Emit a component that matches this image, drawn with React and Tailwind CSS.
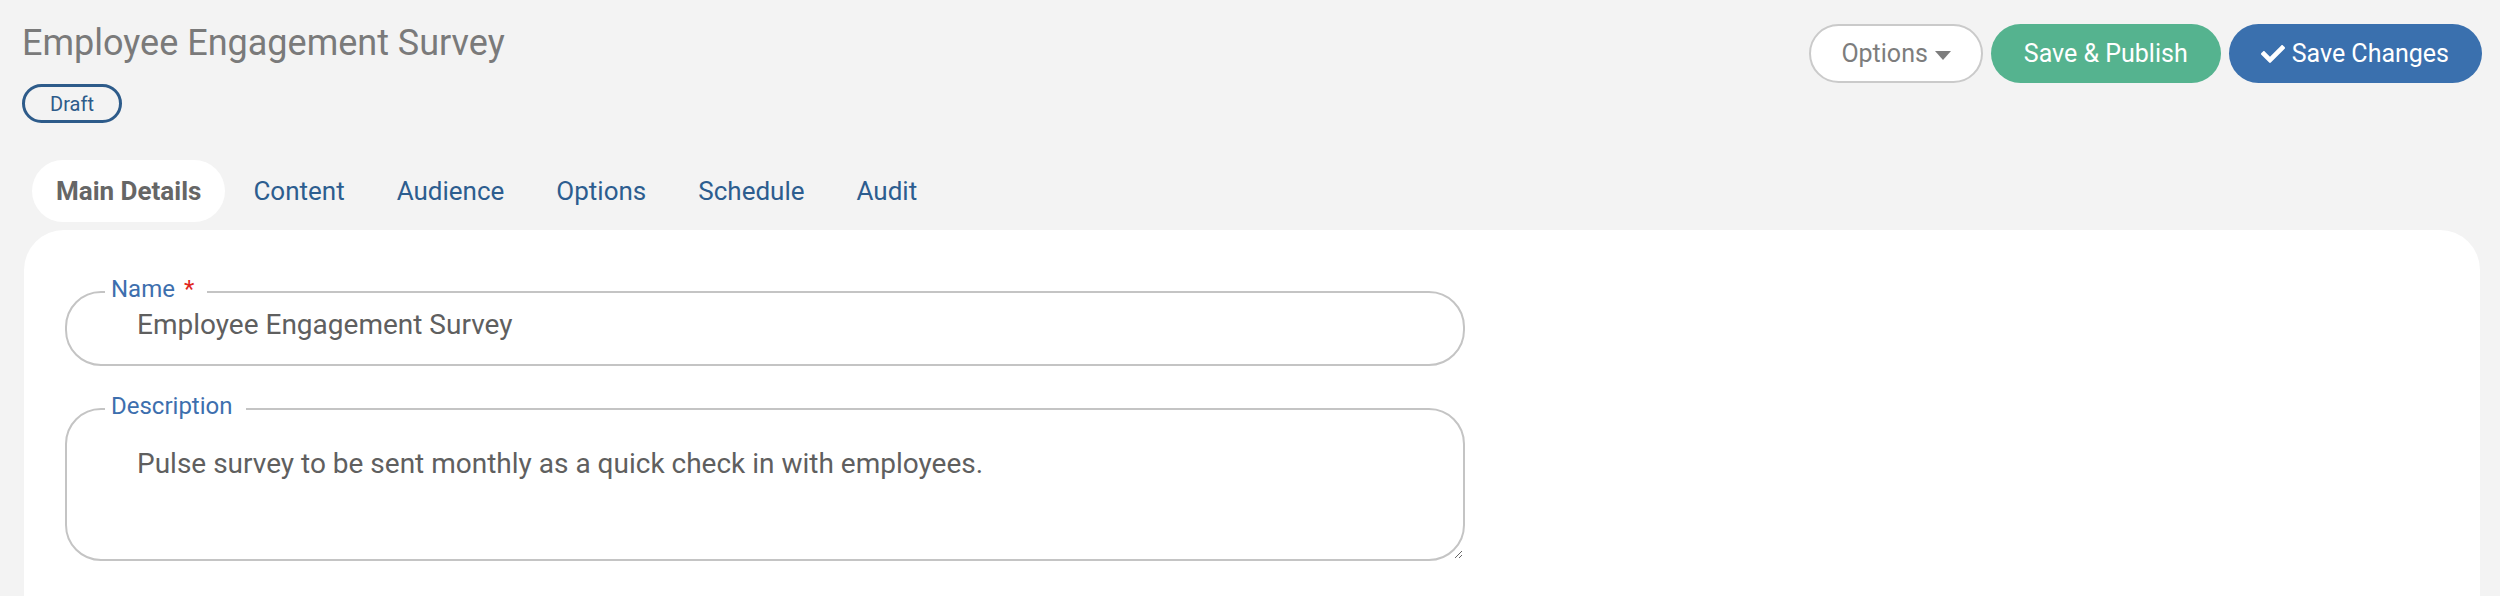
import React from "react";
import { FaCheck } from "react-icons/fa";

const tabs = ["Main Details", "Content", "Audience", "Options", "Schedule", "Audit"];

export default function App() {
  return (
    <div className="h-[596px] overflow-hidden bg-[#f3f3f3] font-[Roboto,sans-serif] flex flex-col">
      {/* Header */}
      <div className="flex items-start justify-between pt-[24px] pl-[22px] pr-[18px]">
        <div className="flex flex-col items-start">
          <h1 className="mt-[1px] text-[36px] leading-none font-normal text-[#7a7a7a]">
            Employee Engagement Survey
          </h1>
          <span className="mt-[23px] flex h-[39px] w-[100px] items-center justify-center rounded-full border-[3px] border-[#2d5b8a] text-[20px] leading-none text-[#2d5b8a]">
            Draft
          </span>
        </div>
        <div className="flex items-center gap-[8px]">
          <button className="flex h-[59px] items-center rounded-full border-2 border-[#cacaca] bg-white pl-[30px] pr-[30px] text-[25px] leading-none text-[#7d7d7d]">
            Options
            <svg className="ml-[7px] mt-[3px]" width="16" height="9" viewBox="0 0 16 9">
              <polygon points="0,0 16,0 8,9" fill="#7d7d7d" />
            </svg>
          </button>
          <button className="flex h-[59px] items-center rounded-full bg-[#55b38f] px-[33px] text-[25px] leading-none text-white">
            Save &amp; Publish
          </button>
          <button className="flex h-[59px] items-center gap-[7px] rounded-full bg-[#3a70ae] pl-[32px] pr-[33px] text-[25px] leading-none text-white">
            <FaCheck size={24} />
            Save Changes
          </button>
        </div>
      </div>

      {/* Tabs */}
      <div className="mt-[37px] flex items-center gap-[4px] pl-[32px]">
        {tabs.map((t, i) => (
          <div
            key={t}
            className={
              i === 0
                ? "flex h-[62px] items-center rounded-full bg-white px-[24px] text-[26px] font-bold leading-none text-[#666666]"
                : "flex h-[62px] items-center rounded-full px-[24px] text-[26px] leading-none text-[#2c5d8f]"
            }
          >
            {t}
          </div>
        ))}
      </div>

      {/* Card */}
      <div className="ml-[24px] mr-[20px] mt-[8px] min-h-[500px] rounded-[40px] bg-white pl-[41px] pt-[47px]">
        <fieldset className="w-[1400px] rounded-[36px] border-2 border-[#c4c4c4]">
          <legend className="ml-[38px] pb-[6px] pl-[6px] pr-[13px] text-[24px] leading-none text-[#3d6fae]">
            Name<span className="ml-[9px] text-[#e0261d]">*</span>
          </legend>
          <div className="pb-[22px] pl-[70px] pr-[20px] pt-[1px]">
            <input
              readOnly
              defaultValue="Employee Engagement Survey"
              className="block h-[34px] w-full bg-transparent text-[28px] leading-[34px] text-[#5f5f5f] outline-none"
            />
          </div>
        </fieldset>

        <fieldset className="mt-[28px] w-[1400px] rounded-[36px] border-2 border-[#c4c4c4]">
          <legend className="ml-[38px] pb-[6px] pl-[6px] pr-[13px] text-[24px] leading-none text-[#3d6fae]">
            Description
          </legend>
          <textarea
            readOnly
            defaultValue="Pulse survey to be sent monthly as a quick check in with employees."
            className="block h-[135px] w-full bg-transparent pl-[70px] pr-[20px] pt-[26px] text-[28px] leading-[28px] text-[#5f5f5f] outline-none"
          />
        </fieldset>
      </div>
    </div>
  );
}
